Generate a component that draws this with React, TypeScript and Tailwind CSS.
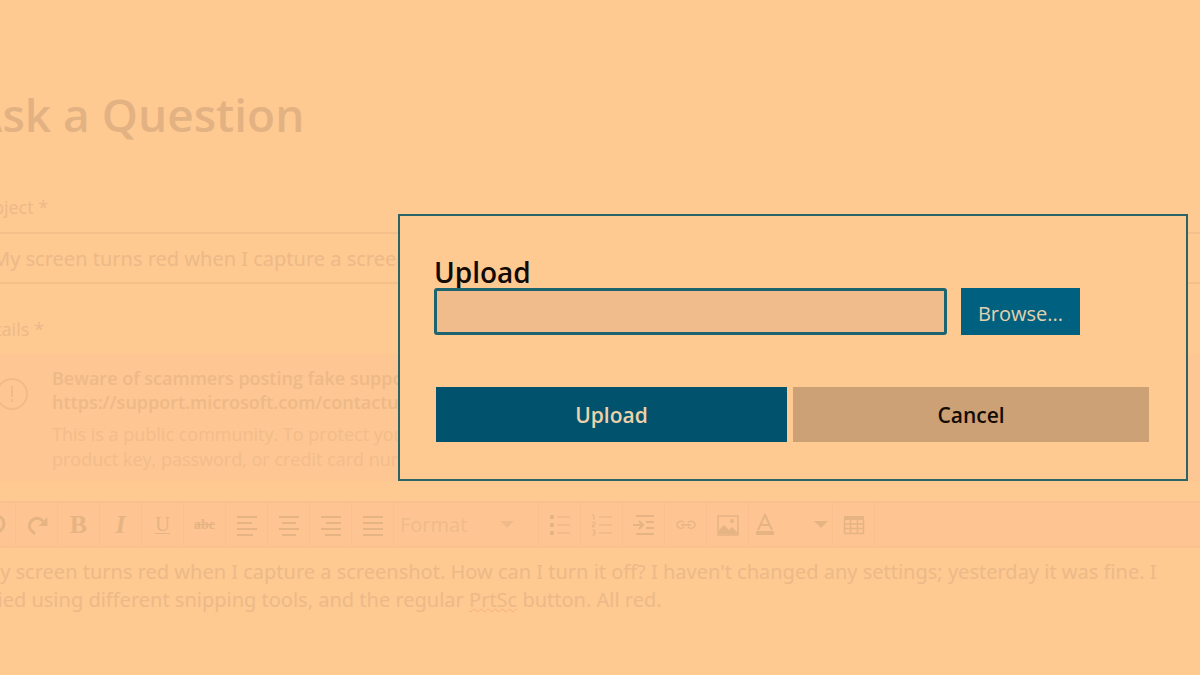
import type { ReactNode } from "react";
import clsx from "clsx";

function Icon({ children }: { children: ReactNode }) {
  return (
    <svg viewBox="0 0 24 24" className="size-6" fill="none" stroke="currentColor" strokeWidth="2" aria-hidden="true">
      {children}
    </svg>
  );
}

const Caret = () => (
  <svg viewBox="0 0 14 7" className="h-[7px] w-[14px]" fill="currentColor" aria-hidden="true">
    <path d="M0 0h14L7 7z" />
  </svg>
);

function ToolButton({ label, children }: { label: string; children: ReactNode }) {
  return (
    <button
      type="button"
      aria-label={label}
      className="flex h-full w-[42px] shrink-0 items-center justify-center border-r border-[#fac08e]"
    >
      {children}
    </button>
  );
}

const linesByAlign = [
  { label: "Align left", d: "M2 4h20M2 10h15M2 16h20M2 22h16" },
  { label: "Align center", d: "M2 4h20M5 10h14M2 16h20M5 22h14" },
  { label: "Align right", d: "M2 4h20M7 10h15M2 16h20M6 22h16" },
  { label: "Justify", d: "M2 4h20M2 10h20M2 16h20M2 22h20" },
];

function Toolbar() {
  return (
    <div
      role="toolbar"
      aria-label="Formatting"
      className="flex h-[47px] items-center border-y-2 border-[#fac08e] bg-[#fec592] pl-0.5 text-[#e6b383]"
    >
      <ToolButton label="Undo">
        <Icon>
          <path d="M14 21l5-5a8 8 0 1 0-14-6" strokeWidth="3" />
          <path d="M1 4v9h9z" fill="currentColor" stroke="none" />
        </Icon>
      </ToolButton>
      <ToolButton label="Redo">
        <Icon>
          <path d="M10 21l-5-5a7.500 7.500 0 1 1 14-6" strokeWidth="3" />
          <path d="M22.500 4v9h-9z" fill="currentColor" stroke="none" />
        </Icon>
      </ToolButton>
      <ToolButton label="Bold">
        <span className="font-['Liberation_Serif',serif] text-[26px] font-bold">B</span>
      </ToolButton>
      <ToolButton label="Italic">
        <span className="font-['Liberation_Serif',serif] text-[26px] font-bold italic">I</span>
      </ToolButton>
      <ToolButton label="Underline">
        <span className="border-b border-current font-['Liberation_Serif',serif] text-[21px] leading-[18px]">U</span>
      </ToolButton>
      <ToolButton label="Strikethrough">
        <span className="font-['Liberation_Serif',serif] text-sm font-bold line-through">abc</span>
      </ToolButton>
      {linesByAlign.map(({ label, d }) => (
        <ToolButton key={label} label={label}>
          <Icon>
            <path d={d} />
          </Icon>
        </ToolButton>
      ))}
      <button
        type="button"
        className="flex h-full w-[145px] shrink-0 items-center justify-between border-r border-[#fac08e] pr-6 pl-1.5 text-xl text-[#efbb8a]"
      >
        Format
        <Caret />
      </button>
      <ToolButton label="Bulleted list">
        <Icon>
          <path d="M2 4h4M2 12h4M2 20h4" strokeWidth="4" />
          <path d="M9 4h13M9 12h13M9 20h13" strokeWidth="1" />
        </Icon>
      </ToolButton>
      <ToolButton label="Numbered list">
        <Icon>
          <path d="M2 2h2v5M2 9.500h3v2.500H2.500v2H5M2 17h3v5H2M3 19.500h2" strokeWidth="1" />
          <path d="M9 4h13M9 12h13M9 20h13" strokeWidth="1" />
        </Icon>
      </ToolButton>
      <ToolButton label="Increase indent">
        <Icon>
          <path d="M4 3h18M14 9h8M14 15h8M4 21h18" strokeWidth="2" />
          <path d="M1 12h10M7 8l4 4-4 4" />
        </Icon>
      </ToolButton>
      <ToolButton label="Insert link">
        <Icon>
          <path d="M10 9.500A4 3.500 0 1 0 10 14M14 14a4 3.500 0 1 0 0-4.500M7 12h10" strokeWidth="1.500" />
        </Icon>
      </ToolButton>
      <ToolButton label="Insert image">
        <Icon>
          <path d="M2 3h20v19H2z" strokeWidth="1.500" />
          <path d="M3 21v-4l5-5 5 5 3-3 5 5v2z" fill="currentColor" stroke="none" />
          <circle cx="16" cy="8" r="2" fill="currentColor" stroke="none" />
        </Icon>
      </ToolButton>
      <button
        type="button"
        aria-label="Text color"
        className="flex h-full w-[84px] shrink-0 items-center justify-between border-r border-[#fac08e] px-1"
      >
        <Icon>
          <path d="M5 17l7-15 7 15M8 12h8" />
          <path d="M3 20h18" strokeWidth="4" />
        </Icon>
        <Caret />
      </button>
      <ToolButton label="Insert table">
        <Icon>
          <path d="M2 5h20" strokeWidth="4" />
          <path d="M2.500 6v14.500h19V6M2 11h20M2 15.500h20M8.500 7v14M15.500 7v14" strokeWidth="1.500" />
        </Icon>
      </ToolButton>
    </div>
  );
}

function Notice() {
  return (
    <section className="mt-3 flex h-[127px] bg-[#fec692] pt-3 pl-6">
      <svg viewBox="0 0 32 32" className="mt-3 mr-6 size-8 shrink-0 text-[#f1bb89]" fill="none" stroke="currentColor" strokeWidth="2" aria-hidden="true">
        <circle cx="16" cy="16" r="15" />
        <path d="M16 8v11M16 21v3" />
      </svg>
      <div className="text-[18px] leading-6">
        <p className="font-semibold text-[#edb988]">
          Beware of scammers posting fake support numbers here.
          <br />
          https://support.microsoft.com/contactus
        </p>
        <p className="mt-2 leading-[25px] text-[#f1bd8b]">
          This is a public community. To protect your privacy, do not post your
          <br />
          product key, password, or credit card number.
        </p>
      </div>
    </section>
  );
}

function QuestionForm() {
  return (
    <main className="-ml-7 pt-[80px] text-[#ecb988]">
      <h1 className="text-[46px] leading-[68px] font-semibold text-[#e3b282]">Ask a Question</h1>
      <form>
        <label htmlFor="subject" className="mt-[46px] block text-[18px] leading-[26px]">
          Subject *
        </label>
        <input
          id="subject"
          readOnly
          value="My screen turns red when I capture a screenshot"
          className="mt-3 block h-[52px] w-full border-y-2 border-[#f5bf8b] pl-5 font-['Noto_Sans',sans-serif] text-xl outline-none"
        />
        <div className="mt-8 text-[18px] leading-[26px]" id="details-label">
          Details *
        </div>
        <Notice />
        <div className="mt-5">
          <Toolbar />
          <div
            role="textbox"
            aria-multiline="true"
            aria-labelledby="details-label"
            className="pt-2.5 pl-2.5 font-['Noto_Sans',sans-serif] text-xl leading-7 whitespace-nowrap"
          >
            My screen turns red when I capture a screenshot. How can I turn it off? I haven't changed any settings;
            yesterday it was fine. I
            <br />
            tried using different snipping tools, and the regular{" "}
            <span className="underline decoration-[#f8ae80] decoration-wavy decoration-1">PrtSc</span> button. All red.
          </div>
        </div>
      </form>
    </main>
  );
}

function ActionButton({ primary, children }: { primary?: boolean; children: ReactNode }) {
  return (
    <button
      type="button"
      className={clsx(
        "h-[55px] pt-0.5 text-[21px] font-semibold",
        primary ? "w-[351px] bg-[#00526d] text-[#ecd2ab]" : "flex-1 bg-[#cca176] text-[#150b05]"
      )}
    >
      {children}
    </button>
  );
}

function UploadDialog() {
  return (
    <div className="absolute inset-0 flex items-start justify-end pt-[214px] pr-3">
      <div
        role="dialog"
        aria-label="Upload"
        className="w-[790px] border-2 border-[#2b6467] bg-[#ffc992] pt-10 pr-[37px] pb-[37px] pl-[34px]"
      >
        <label htmlFor="file" className="block text-[28px] leading-8 font-semibold text-[#120a05]">
          Upload
        </label>
        <div className="flex gap-3.5">
          <input
            id="file"
            type="text"
            className="h-[47px] w-[513px] rounded-[3px] border-3 border-[#1b6470] bg-[#f0bc8b] px-2 outline-none"
          />
          <button type="button" className="h-[47px] w-[119px] bg-[#00607f] pt-1 text-xl text-[#e4d1ae]">
            Browse...
          </button>
        </div>
        <div className="mt-[52px] flex gap-1.5 pl-0.5">
          <ActionButton primary>Upload</ActionButton>
          <ActionButton>Cancel</ActionButton>
        </div>
      </div>
    </div>
  );
}

export default function App() {
  return (
    <div className="relative min-h-screen overflow-hidden bg-[#ffc992] font-['Open_Sans','Noto_Sans',sans-serif]">
      <QuestionForm />
      <UploadDialog />
    </div>
  );
}
